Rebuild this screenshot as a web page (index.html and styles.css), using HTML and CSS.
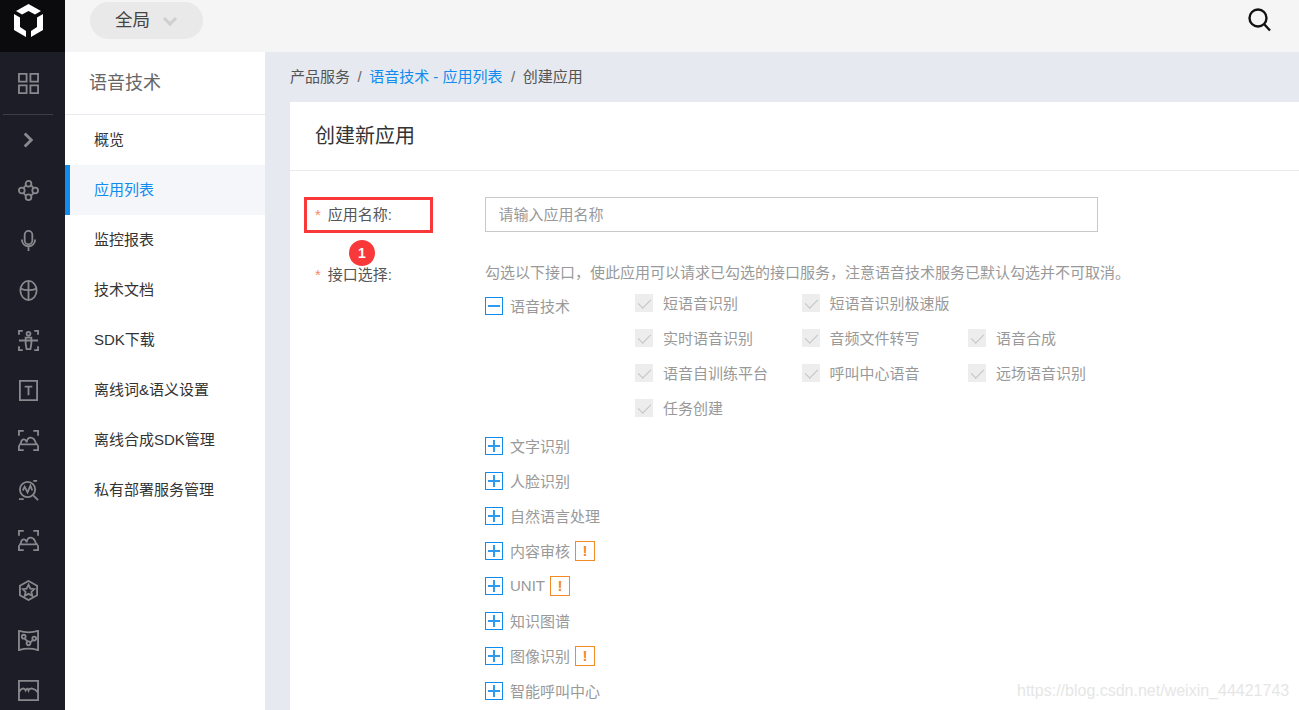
FILE: index.html
```html
<!DOCTYPE html>
<html lang="zh-CN">
<head>
    <meta charset="UTF-8">
    <meta name="viewport" content="width=device-width, initial-scale=1.0">
    <title>创建新应用</title>
    <link rel="stylesheet" href="styles.css">
</head>
<body>
    <aside class="rail">
        <div class="rail-logo">
            <svg width="29" height="33" viewBox="0 0 29 33"><path fill="#fff" d="M14.500 0L27 7l-6 3.500-6.500-3.500L8 10.500 2 7zM0 10l6 3.500V23l6 4v6L0 26zM29 10l-6 3.500V23l-6 4v6l12-7z"/></svg>
        </div>
        <div class="rail-item rail-first">
            <svg class="ico" viewBox="0 0 22 22"><path d="M1 1h8v8H1zM13 1h8v8h-8zM1 13h8v8H1zM13 13h8v8h-8z"/></svg>
        </div>
        <div class="rail-item">
            <svg class="ico ico-bold" viewBox="0 0 22 22"><path d="M7 3l8 8-8 8"/></svg>
        </div>
        <div class="rail-item">
            <svg class="ico" viewBox="0 0 22 22"><circle cx="11" cy="4" r="3"/><circle cx="11" cy="18" r="3"/><circle cx="4" cy="11" r="3"/><circle cx="18" cy="11" r="3"/><path d="M6 8l2-2M14 6l2 2M6 14l2 2M14 16l2-2"/></svg>
        </div>
        <div class="rail-item">
            <svg class="ico" viewBox="0 0 22 22"><rect x="7" y="1" width="8" height="14" rx="4"/><path d="M4 10a7 7 0 0 0 14 0M11 17v5"/></svg>
        </div>
        <div class="rail-item">
            <svg class="ico" viewBox="0 0 22 22"><ellipse cx="11" cy="11" rx="8.500" ry="10"/><path d="M2.500 9c5 2 12 2 17 0M11 1v20"/></svg>
        </div>
        <div class="rail-item">
            <svg class="ico" viewBox="0 0 22 22"><path d="M1 5V1h4M17 1h4v4M1 17v4h4M21 17v4h-4M1 11h20"/><circle cx="11" cy="4" r="2"/><path d="M8 8h6v6l-1 6h-4l-1-6z"/></svg>
        </div>
        <div class="rail-item">
            <svg class="ico" viewBox="0 0 22 22"><path d="M2 1h18v20H2zM7 7h8M11 7v9"/></svg>
        </div>
        <div class="rail-item">
            <svg class="ico" viewBox="0 0 22 22"><path d="M1 6V1h5M16 1h5v5M1 15h20M1 16v5h5M21 16v5h-5M3 15c0-6 5-7 6-2 1-7 8-7 10 2"/></svg>
        </div>
        <div class="rail-item">
            <svg class="ico" viewBox="0 0 22 22"><circle cx="10" cy="10" r="8"/><path d="M5 11l2-4 3 6 3-7 2 5M16 16l5 5M16 1h4M1 20h5"/></svg>
        </div>
        <div class="rail-item">
            <svg class="ico" viewBox="0 0 22 22"><path d="M1 6V1h5M16 1h5v5M1 15h20M1 16v5h5M21 16v5h-5M3 15c0-6 5-7 6-2 1-7 8-7 10 2"/></svg>
        </div>
        <div class="rail-item">
            <svg class="ico" viewBox="0 0 22 22"><path d="M11 1l9 5v10l-9 5-9-5V6z"/><path d="M11 5l2 4 4 .500-3 3 1 4-4-2-4 2 1-4-3-3 4-.500z"/></svg>
        </div>
        <div class="rail-item">
            <svg class="ico" viewBox="0 0 22 22"><path d="M1 1c7 2 13 2 20 0v20c-7-2-13-2-20 0z"/><circle cx="6" cy="7" r="2"/><circle cx="11" cy="14" r="2"/><circle cx="17" cy="9" r="2"/><path d="M7 9l3 3M13 13l3-3"/></svg>
        </div>
        <div class="rail-item">
            <svg class="ico" viewBox="0 0 22 22"><path d="M1 1h20v20H1zM1 13c2-5 6-5 7-2 2-3 2-3 3 0 1-3 6-3 10 2"/></svg>
        </div>
    </aside>

    <div class="page">
        <header class="topbar">
            <div class="scope">全局<span class="scope-arrow"></span></div>
            <svg class="search" width="26" height="26" viewBox="0 0 26 26"><circle cx="11" cy="11" r="8.500"/><path d="M17 17l6 6.500"/></svg>
        </header>

        <div class="body-row">
            <nav class="side">
                <div class="side-title">语音技术</div>
                <a class="side-item">概览</a>
                <a class="side-item active">应用列表</a>
                <a class="side-item">监控报表</a>
                <a class="side-item">技术文档</a>
                <a class="side-item">SDK下载</a>
                <a class="side-item">离线词&amp;语义设置</a>
                <a class="side-item">离线合成SDK管理</a>
                <a class="side-item">私有部署服务管理</a>
            </nav>

            <main class="main">
                <div class="crumbs">
                    <span>产品服务</span><span class="sep">/</span><a class="crumb-link">语音技术 - 应用列表</a><span class="sep">/</span><span>创建应用</span>
                </div>
                <section class="card">
                    <h2 class="card-title">创建新应用</h2>
                    <form class="form">
                        <div class="form-row name-row">
                            <label class="form-label"><em>*</em>应用名称:</label>
                            <input class="text-input" placeholder="请输入应用名称">
                        </div>
                        <div class="form-row">
                            <label class="form-label api-label"><em>*</em>接口选择:</label>
                            <div class="api-box">
                                <p class="api-hint">勾选以下接口，使此应用可以请求已勾选的接口服务，注意语音技术服务已默认勾选并不可取消。</p>
                                <div class="api-group">
                                    <div class="tree-head">
                                        <span class="toggle minus"></span>语音技术
                                    </div>
                                    <div class="check-grid">
                                        <div class="check"><span class="box"></span>短语音识别</div>
                                        <div class="check wide"><span class="box"></span>短语音识别极速版</div>
                                        <div class="check"><span class="box"></span>实时语音识别</div>
                                        <div class="check"><span class="box"></span>音频文件转写</div>
                                        <div class="check"><span class="box"></span>语音合成</div>
                                        <div class="check"><span class="box"></span>语音自训练平台</div>
                                        <div class="check"><span class="box"></span>呼叫中心语音</div>
                                        <div class="check"><span class="box"></span>远场语音识别</div>
                                        <div class="check"><span class="box"></span>任务创建</div>
                                    </div>
                                </div>
                                <div class="tree-row"><span class="toggle plus"></span>文字识别</div>
                                <div class="tree-row"><span class="toggle plus"></span>人脸识别</div>
                                <div class="tree-row"><span class="toggle plus"></span>自然语言处理</div>
                                <div class="tree-row"><span class="toggle plus"></span>内容审核<span class="warn">!</span></div>
                                <div class="tree-row"><span class="toggle plus"></span>UNIT<span class="warn">!</span></div>
                                <div class="tree-row"><span class="toggle plus"></span>知识图谱</div>
                                <div class="tree-row"><span class="toggle plus"></span>图像识别<span class="warn">!</span></div>
                                <div class="tree-row"><span class="toggle plus"></span>智能呼叫中心</div>
                            </div>
                        </div>
                    </form>
                </section>
            </main>
        </div>
    </div>

    <!-- screenshot annotation -->
    <div class="mark-box"></div>
    <div class="mark-num">1</div>
    <div class="watermark">https://blog.csdn.net/weixin_44421743</div>
</body>
</html>
```

FILE: styles.css
```css
* {
    margin: 0;
    padding: 0;
    box-sizing: border-box;
}

html, body {
    height: 100%;
    overflow: hidden;
}

body {
    font-family: "Liberation Sans", "Noto Sans CJK SC", sans-serif;
    font-size: 15px;
    color: #333;
    display: flex;
    background: #e6e9ef;
}

/* left icon rail */
.rail {
    width: 65px;
    flex-shrink: 0;
    background: #1c1d27;
    padding-right: 9px;
    position: relative;
}

.rail-logo {
    height: 52px;
    background: #0b0b0d;
    display: flex;
    align-items: flex-start;
    justify-content: center;
    padding-top: 4px;
    margin-right: -9px;
    padding-right: 9px;
}

.rail-item {
    height: 50px;
    display: flex;
    align-items: center;
    justify-content: center;
    position: relative;
}

.rail-first {
    height: 63px;
    padding-bottom: 1px;
}

.rail-first::after {
    content: "";
    position: absolute;
    left: 3px;
    right: 3px;
    bottom: 0;
    height: 1px;
    background: #3c3d49;
}

.ico {
    width: 21px;
    height: 21px;
    fill: none;
    stroke: #88898d;
    stroke-width: 1.900;
}

.ico-bold {
    width: 18px;
    height: 18px;
    stroke-width: 3.500;
}

/* top bar */
.page {
    flex: 1;
    min-width: 0;
    display: flex;
    flex-direction: column;
}

.topbar {
    height: 52px;
    flex-shrink: 0;
    background: #f5f5f5;
    display: flex;
    align-items: flex-start;
    justify-content: space-between;
    padding: 2px 26px 0 25px;
}

.scope {
    width: 113px;
    height: 37px;
    border-radius: 19px;
    background: #e9e9e9;
    font-size: 17.500px;
    line-height: 37px;
    padding-left: 25px;
    position: relative;
    color: #444;
}

.scope-arrow {
    position: absolute;
    left: 75px;
    top: 12px;
    width: 10px;
    height: 10px;
    border-right: 3px solid #cfcfcf;
    border-bottom: 3px solid #cfcfcf;
    transform: rotate(45deg);
}

.search {
    margin-top: 5px;
    fill: none;
    stroke: #111;
    stroke-width: 2.400;
}

.body-row {
    flex: 1;
    display: flex;
    min-height: 0;
}

/* second sidebar */
.side {
    width: 200px;
    flex-shrink: 0;
    background: #fff;
}

.side-title {
    height: 63px;
    border-bottom: 1px solid #e9ebf2;
    font-size: 18px;
    line-height: 62px;
    padding-left: 24px;
    color: #666;
}

.side-item {
    display: block;
    height: 50px;
    line-height: 49px;
    padding-left: 29px;
    color: #333;
}

.side-item.active {
    background: #f5f6fa;
    color: #108cee;
    border-left: 5px solid #108cee;
    padding-left: 24px;
}

/* content */
.main {
    flex: 1;
    min-width: 0;
    padding-left: 25px;
}

.crumbs {
    height: 50px;
    line-height: 49px;
    color: #555;
}

.sep {
    margin: 0 7.500px;
    color: #666;
}

.crumb-link {
    color: #108cee;
    margin-right: 1px;
}

.card {
    background: #fff;
    height: 700px;
}

.card-title {
    height: 69px;
    line-height: 69px;
    font-size: 20px;
    font-weight: normal;
    padding-left: 25px;
    border-bottom: 1px solid #ebebeb;
    color: #333;
}

.form {
    padding: 26px 0 0 25px;
}

.form-row {
    display: flex;
}

.name-row {
    height: 66px;
}

.form-label {
    width: 170px;
    flex-shrink: 0;
    line-height: 35px;
    color: #555;
}

.api-label {
    line-height: 20px;
    padding-top: 2px;
}

.form-label em {
    font-style: normal;
    color: #f38a6d;
    margin-right: 7px;
}

.text-input {
    width: 613px;
    height: 35px;
    border: 1px solid #c8c8c8;
    padding: 0 12.500px;
    font: inherit;
    outline: none;
}

.text-input::placeholder {
    color: #999;
}

.api-hint {
    color: #999;
    line-height: 20px;
    white-space: nowrap;
    margin-bottom: 2px;
}

.api-group {
    display: flex;
    height: 143px;
    color: #999;
}

.tree-head {
    width: 150px;
    flex-shrink: 0;
    display: flex;
    align-items: center;
    height: 35px;
    padding-top: 6px;
}

.check-grid {
    display: grid;
    grid-template-columns: repeat(3, 166.500px);
    grid-auto-rows: 35px;
}

.check {
    display: flex;
    align-items: center;
    white-space: nowrap;
}

.box {
    width: 18px;
    height: 18px;
    background: #ededed;
    margin-right: 10px;
    position: relative;
}

.box::after {
    content: "";
    position: absolute;
    left: 6px;
    top: 2px;
    width: 6px;
    height: 11px;
    border-right: 1.500px solid #c4c4c4;
    border-bottom: 1.500px solid #c4c4c4;
    transform: rotate(45deg);
}

.wide {
    grid-column: span 2;
}

.tree-row {
    height: 35px;
    display: flex;
    align-items: center;
    color: #999;
    white-space: nowrap;
}

.toggle {
    width: 18px;
    height: 18px;
    border: 1px solid #108cee;
    margin-right: 7px;
    position: relative;
    flex-shrink: 0;
}

.toggle::before {
    content: "";
    position: absolute;
    left: 2px;
    right: 2px;
    top: 7px;
    height: 2px;
    background: #2d9bf0;
}

.plus::after {
    content: "";
    position: absolute;
    top: 2px;
    bottom: 2px;
    left: 7px;
    width: 2px;
    background: #2d9bf0;
}

.warn {
    width: 20px;
    height: 20px;
    border: 1px solid #f38a28;
    color: #f38a28;
    font-weight: bold;
    text-align: center;
    line-height: 18px;
    margin-left: 5px;
}

/* overlays from the screenshot */
.mark-box {
    position: absolute;
    left: 304px;
    top: 197px;
    width: 129px;
    height: 36px;
    border: 3px solid #f93939;
}

.mark-num {
    position: absolute;
    left: 349px;
    top: 240px;
    width: 26px;
    height: 26px;
    border-radius: 50%;
    background: #f93939;
    color: #fff;
    font-size: 14px;
    font-weight: bold;
    text-align: center;
    line-height: 26px;
}

.watermark {
    position: absolute;
    left: 1017px;
    top: 682px;
    font-size: 16px;
    line-height: 18px;
    color: #e6e6e6;
    white-space: nowrap;
}
```
